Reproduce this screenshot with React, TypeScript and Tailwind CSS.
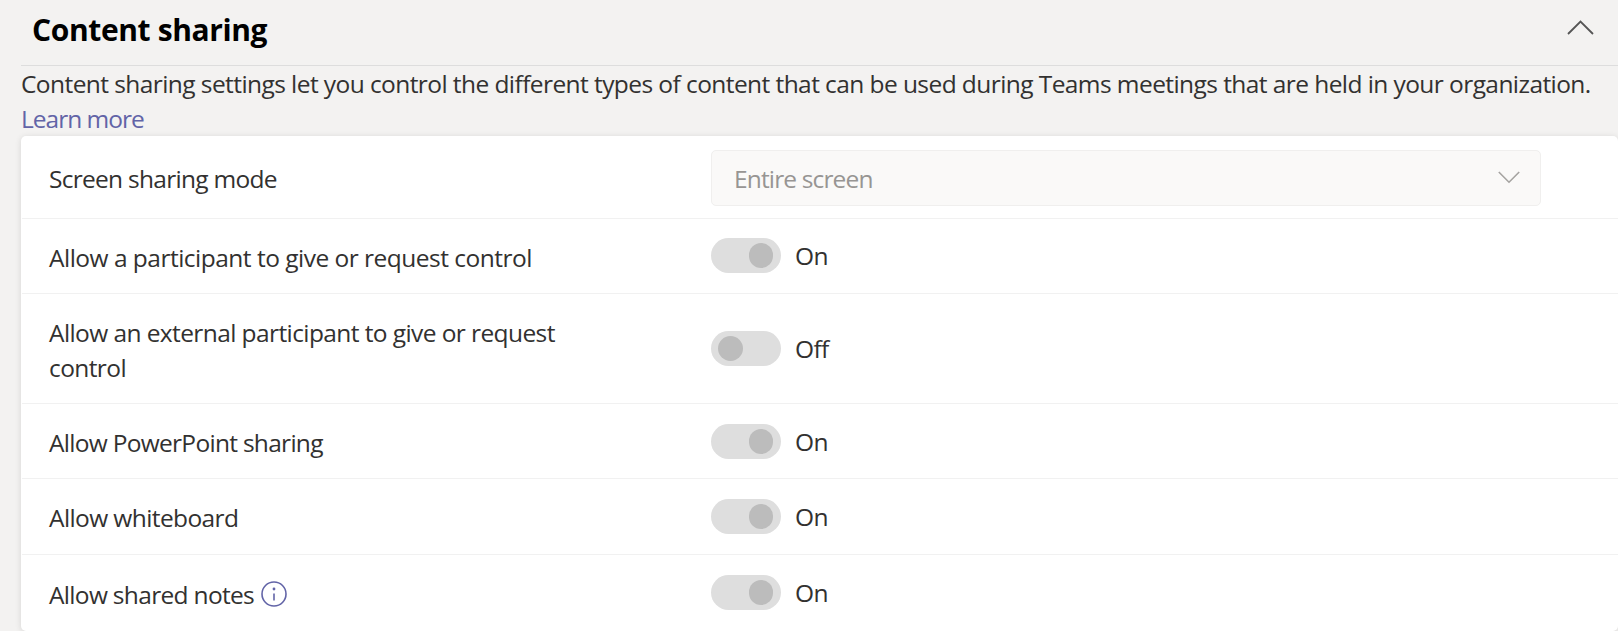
import type { ReactNode } from 'react';

function Toggle({ on, offset = 'mt-[-1px]' }: { on: boolean; offset?: string }) {
  return (
    <div className={`flex items-center gap-[14px] ${offset}`}>
      <button
        role="switch"
        aria-checked={on}
        disabled
        className={`flex h-[35px] w-[70px] shrink-0 items-center rounded-full bg-[#dedede] ${on ? 'justify-end pr-2' : 'justify-start pl-[7px]'}`}
      >
        <span className={`h-[25px] rounded-full bg-[#bcbcbc] ${on ? 'w-[24px]' : 'w-[25px]'}`} />
      </button>
      <span className="leading-[35px] tracking-[-0.6px]">{on ? 'On' : 'Off'}</span>
    </div>
  );
}

function Row({ label, height, track, children }: { label: ReactNode; height: string; track: string; children: ReactNode }) {
  return (
    <div className={`flex items-center border-b border-[#f1f1f1] pl-[27px] last:border-b-0 ${height}`}>
      <div className={`mr-[112px] w-[550px] shrink-0 pt-[2px] ${track}`}>{label}</div>
      {children}
    </div>
  );
}

export default function App() {
  return (
    <div className="h-[631px] w-full overflow-hidden bg-[#f3f2f1] pl-[21px] font-['Open_Sans','Noto_Sans',sans-serif] text-[24.5px] leading-[35px] text-[#323130]">
      <header className="flex h-[66px] items-start justify-between border-b border-[#dddddd] pr-[24px] pl-[11px]">
        <h1 className="pt-[12px] text-[30px] leading-[36px] font-bold tracking-[-0.38px] text-black">Content sharing</h1>
        <svg width="27" height="15" viewBox="0 0 27 15" className="mt-5" fill="none" stroke="#555" strokeWidth="1.8">
          <path d="M1 14 13.5 1.5 26 14" />
        </svg>
      </header>
      <div className="h-[70px] whitespace-nowrap">
        <p className="tracking-[-0.575px]">Content sharing settings let you control the different types of content that can be used during Teams meetings that are held in your organization.</p>
        <a className="tracking-[-1px] text-[#6264a7]">Learn more</a>
      </div>
      <section className="h-[495px] rounded-[5px] bg-white pl-px shadow-[0_1px_6px_rgba(0,0,0,0.12)]">
        <Row label="Screen sharing mode" height="h-[83px]" track="tracking-[-0.72px]">
          <div className="mt-[2px] flex h-[56px] w-[830px] items-center justify-between rounded-[5px] border border-[#f0efee] bg-[#faf9f8] pr-5 pl-[22px] text-[#979593]">
            <span className="tracking-[-0.85px]">Entire screen</span>
            <svg width="22" height="13" viewBox="0 0 22 13" className="mb-[1px]" fill="none" stroke="#a5a3a1" strokeWidth="1.6">
              <path d="M0.8 1 11 11.2 21.2 1" />
            </svg>
          </div>
        </Row>
        <Row label="Allow a participant to give or request control" height="h-[75px]" track="tracking-[-0.51px]">
          <Toggle on />
        </Row>
        <Row label="Allow an external participant to give or request control" height="h-[110px]" track="tracking-[-0.59px]">
          <Toggle on={false} />
        </Row>
        <Row label="Allow PowerPoint sharing" height="h-[75px]" track="tracking-[-0.71px]">
          <Toggle on offset="mt-px" />
        </Row>
        <Row label="Allow whiteboard" height="h-[76px]" track="tracking-[-0.6px]">
          <Toggle on />
        </Row>
        <Row
          height="h-[76px]"
          track="tracking-[-0.68px]"
          label={
            <span className="flex items-center gap-[7px]">
              Allow shared notes
              <svg width="26" height="26" viewBox="0 0 26 26" fill="none" stroke="#6264a7" strokeWidth="1.6">
                <circle cx="13" cy="13" r="12" />
                <path d="M13 12.5v7" />
                <circle cx="13" cy="8" r="1.4" fill="#6264a7" stroke="none" />
              </svg>
            </span>
          }
        >
          <Toggle on />
        </Row>
      </section>
    </div>
  );
}
